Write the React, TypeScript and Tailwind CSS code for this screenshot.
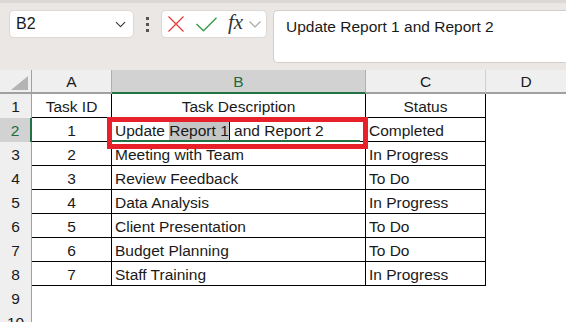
import { ChevronDown } from "lucide-react";

const rows = [
  ["Task ID", "Task Description", "Status"],
  ["1", "Update Report 1 and Report 2", "Completed"],
  ["2", "Meeting with Team", "In Progress"],
  ["3", "Review Feedback", "To Do"],
  ["4", "Data Analysis", "In Progress"],
  ["5", "Client Presentation", "To Do"],
  ["6", "Budget Planning", "To Do"],
  ["7", "Staff Training", "In Progress"],
];

const font = { fontFamily: '"Liberation Sans", Arial, sans-serif' };

const App = () => {
  return (
    <div className="w-[566px] h-[322px] overflow-hidden bg-white text-[15.5px] text-[#1a1a1a] relative" style={font}>
      {/* Toolbar */}
      <div className="h-[70px] bg-[#ebe7e5] border-t-[3px] border-[#dcd8d6] flex items-start pt-[7px]">
        <div className="ml-[9px] w-[125px] h-[28px] bg-white rounded-[5px] border border-[#dcd8d6] flex items-center justify-between pl-[6px] pr-[4px]">
          <span className="text-[16px]">B2</span>
          <ChevronDown size={17} strokeWidth={1.5} className="text-[#333]" />
        </div>
        <div className="w-[27px] h-[28px] flex flex-col items-center justify-center gap-[3px]">
          <div className="w-[3px] h-[3px] bg-[#555]" />
          <div className="w-[3px] h-[3px] bg-[#555]" />
          <div className="w-[3px] h-[3px] bg-[#555]" />
        </div>
        <div className="w-[106px] h-[28px] bg-white rounded-[5px] border border-[#dcd8d6] flex items-center pl-[6px]">
          <svg width="16" height="16" viewBox="0 0 16 16" className="shrink-0">
            <path d="M0.5 0.5 L15.5 15.5 M15.5 0.5 L0.5 15.5" stroke="#e5393b" strokeWidth="1.3" fill="none" />
          </svg>
          <svg width="21" height="15" viewBox="0 0 21 15" className="ml-[12px] shrink-0">
            <path d="M0.5 7 L7.5 13.8 L20.5 0.8" stroke="#3a9a4b" strokeWidth="1.4" fill="none" />
          </svg>
          <span className="ml-[11px] italic text-[21px] text-[#333] leading-none pb-[3px]" style={{ fontFamily: '"Liberation Serif", serif' }}>
            fx
          </span>
          <svg width="12" height="7" viewBox="0 0 12 7" className="ml-[6px] shrink-0">
            <path d="M0.5 0.5 L6 6 L11.5 0.5" stroke="#a8a8a8" strokeWidth="1.2" fill="none" />
          </svg>
        </div>
        <div className="ml-[6px] flex-1 h-[53px] bg-white rounded-l-[5px] border border-r-0 border-[#d2cecc] pl-[12px] pt-[4px]">
          Update Report 1 and Report 2
        </div>
      </div>

      {/* Column headers */}
      <div className="flex h-[24px] bg-[#efefef]">
        <div className="w-[32px] border-r border-[#a0a0a0] border-b-2 border-b-[#a0a0a0] relative">
          <div className="absolute right-[3px] bottom-[2px] w-0 h-0 border-l-[17px] border-l-transparent border-b-[14px] border-b-[#b4b4b4]" />
        </div>
        <div className="w-[80px] border-r border-[#b0b0b0] border-b-2 border-b-[#a0a0a0] flex items-center justify-center pt-[2px]">A</div>
        <div className="w-[254px] bg-[#d2d2d2] border-r border-[#b0b0b0] border-b-2 border-b-[#217346] flex items-center justify-center pt-[2px] text-[#1e6b3f]">B</div>
        <div className="w-[120px] border-r border-[#d0d0d0] border-b-2 border-b-[#a0a0a0] flex items-center justify-center pt-[2px]">C</div>
        <div className="flex-1 border-b-2 border-b-[#a0a0a0] flex items-center justify-center pt-[2px]">D</div>
      </div>

      {/* Rows */}
      {Array.from({ length: 10 }).map((_, i) => {
        const data = rows[i];
        const selected = i === 1;
        return (
          <div key={i} className="flex h-[24px]">
            <div
              className={
                selected
                  ? "w-[32px] bg-[#d2d2d2] border-r-2 border-[#217346] text-[#1e6b3f] flex items-center justify-center pt-[2px]"
                  : "w-[32px] bg-[#efefef] border-r border-[#a0a0a0] flex items-center justify-center pt-[2px]"
              }
            >
              {i + 1}
            </div>
            {data ? (
              <>
                <div className="w-[80px] border-r border-b border-black flex items-center justify-center pt-[2px]">{data[0]}</div>
                <div
                  className={
                    i === 0
                      ? "w-[254px] border-r border-b border-black flex items-center justify-center pt-[2px]"
                      : "w-[254px] border-r border-b border-black flex items-center pl-[3px] pt-[2px]"
                  }
                >
                  {selected ? (
                    <>
                      <span className="whitespace-pre">Update </span>
                      <span className="bg-[#c6c6c6] h-[20px] flex items-center">Report 1</span>
                      <span className="w-px h-[20px] bg-black" />
                      <span className="whitespace-pre"> and Report 2</span>
                    </>
                  ) : (
                    data[1]
                  )}
                </div>
                <div
                  className={
                    i === 0
                      ? "w-[120px] border-r border-b border-black flex items-center justify-center pt-[2px]"
                      : "w-[120px] border-r border-b border-black flex items-center pl-[3px] pt-[2px]"
                  }
                >
                  {data[2]}
                </div>
              </>
            ) : null}
          </div>
        );
      })}

      {/* Green cell cursor under B2 */}
      <div className="absolute left-[112px] top-[140px] w-[248px] h-[2px] bg-[#217346]" />
      {/* Red annotation box */}
      <div className="absolute left-[107px] top-[117px] w-[261px] h-[32px] border-[5px] border-[#e8202a]" />
    </div>
  );
};

export default App;
